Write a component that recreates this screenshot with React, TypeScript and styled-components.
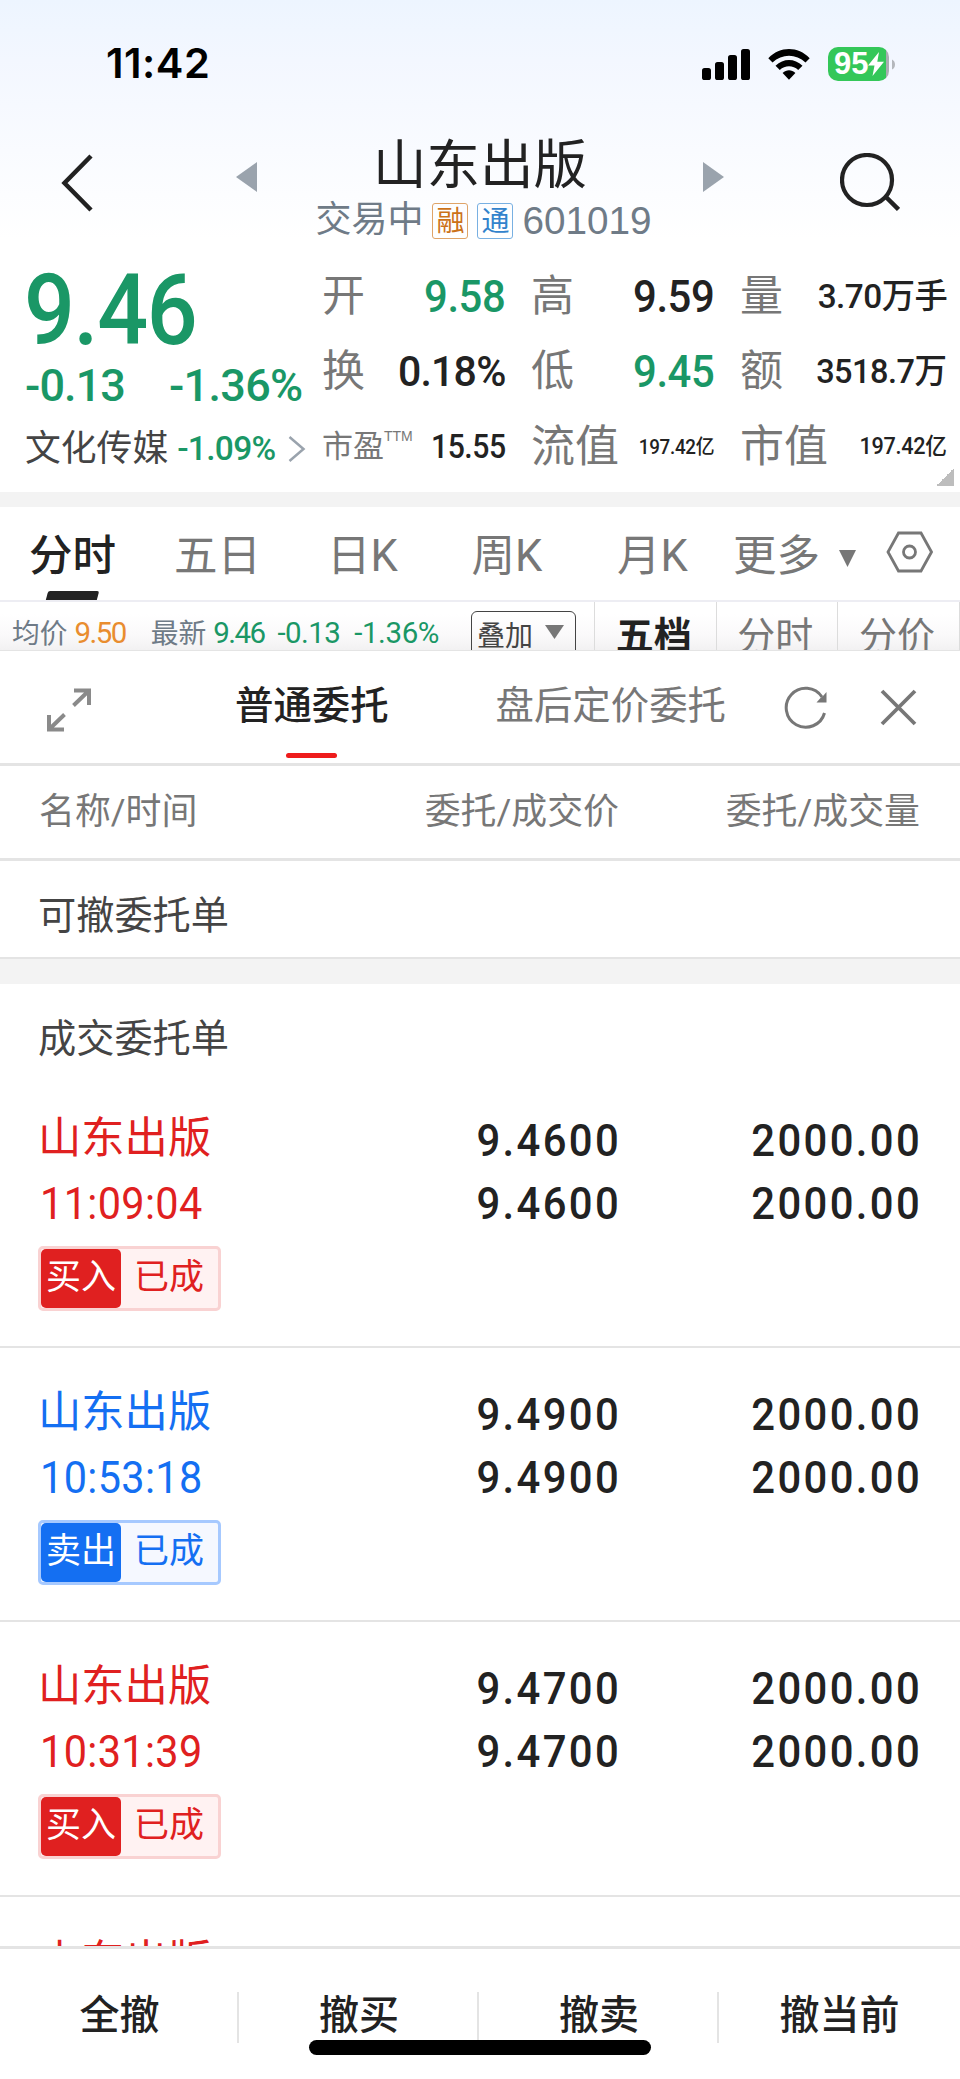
import React from "react";
import styled, { createGlobalStyle } from "styled-components";

const GREEN = "#1a9766";
const INK = "#222222";
const GREY = "#777777";
const SLATE = "#6f7b87";
const LINE = "#e4e4e4";
const RED = "#e02020";
const BLUE = "#146ff2";

const GlobalStyle = createGlobalStyle`
  * { box-sizing: border-box; }
  body {
    margin: 0;
    background: #fff;
    color: ${INK};
    font-family: Roboto, "Noto Sans CJK SC", sans-serif;
  }
  svg { display: block; flex: none; }
`;

const Screen = styled.div`
  width: 960px;
  height: 2079px;
  overflow: hidden;
  display: flex;
  flex-direction: column;
  background: #fff;
`;

interface LabelProps {
  $size: number;
  $color?: string;
  $weight?: number;
  $spacing?: number;
  $ml?: number;
}

const Label = styled.span<LabelProps>`
  font-size: ${(p) => p.$size}px;
  color: ${(p) => p.$color ?? INK};
  font-weight: ${(p) => p.$weight ?? 400};
  letter-spacing: ${(p) => p.$spacing ?? 0}px;
  margin-left: ${(p) => p.$ml ?? 0}px;
  line-height: 1.2;
  white-space: nowrap;
`;

const Digits = styled(Label)<{ $narrow?: number }>`
  font-weight: ${(p) => p.$weight ?? 500};
  transform: scaleX(${(p) => p.$narrow ?? 1});
  transform-origin: right center;
`;

/* ---------- top ---------- */

const Top = styled.header`
  height: 248px;
  flex: none;
  background: linear-gradient(#edf5ff 0, #f3f7ff 60px, #fff 240px);
`;

const StatusBar = styled.div`
  height: 128px;
  display: flex;
  align-items: center;
  padding: 0 65px 0 106px;
`;

const Clock = styled.span`
  font: 600 41.5px/1 Inter, sans-serif;
  letter-spacing: 0.5px;
  color: #000;
`;

const StatusIcons = styled.div`
  display: flex;
  align-items: center;
  margin-left: auto;
  gap: 18px;
`;

const Battery = styled.div`
  display: flex;
  align-items: center;
`;

const BatteryBody = styled.div`
  width: 61px;
  height: 34px;
  border-radius: 10px;
  display: flex;
  align-items: center;
  padding-left: 6px;
  color: #fff;
  font: 700 31px/34px "Liberation Sans", sans-serif;
  background: linear-gradient(90deg, #34c759 58px, #a9acb1 58px);
`;

const NavBar = styled.div`
  height: 110px;
  display: flex;
  align-items: center;
  padding: 0 60px 0 61px;
`;

const NavTitle = styled.div`
  display: flex;
  flex-direction: column;
  align-items: center;
  width: 446px;
  padding-top: 6px;
`;

const Title = styled.h1`
  margin: 0;
  font-size: 53.5px;
  line-height: 70px;
  font-weight: 400;
`;

const SubTitle = styled.div`
  display: flex;
  align-items: center;
  height: 40px;
  margin-left: 7px;
`;

const Tag = styled.span<{ $color: string; $line: string }>`
  width: 36px;
  height: 36px;
  border: 1.5px solid ${(p) => p.$line};
  border-radius: 3px;
  color: ${(p) => p.$color};
  font-size: 28px;
  line-height: 36px;
  text-align: center;
  margin-left: 9px;
`;

const Code = styled.span`
  font: 38.7px/40px "Liberation Sans", sans-serif;
  color: ${SLATE};
  margin-left: 9px;
`;

/* ---------- quote ---------- */

const Quote = styled.section`
  height: 244px;
  flex: none;
  display: flex;
`;

const PriceBlock = styled.div`
  width: 323px;
  padding-left: 25px;
`;

const BigPrice = styled.div`
  height: 102px;
  padding-top: 18px;
  font-size: 98px;
  line-height: 90px;
  font-weight: 500;
  letter-spacing: -1.5px;
  margin-left: -1px;
  color: ${GREEN};
  transform: scaleX(0.915);
  transform-origin: left center;
`;

const PriceRow = styled.div<{ $h: number; $pt?: number }>`
  display: flex;
  align-items: center;
  height: ${(p) => p.$h}px;
  padding-top: ${(p) => p.$pt ?? 0}px;
`;

const Stats = styled.div`
  flex: 1;
  display: grid;
  grid-template-columns: 183.5px 183.5px 207px;
  grid-template-rows: 75px 75px 76px;
  column-gap: 25.5px;
  padding: 11px 0 0 0;
  margin-left: -1px;
`;

const Stat = styled.div`
  display: flex;
  align-items: center;
  justify-content: space-between;
`;

const Ttm = styled.sup`
  font: 14px/14px "Liberation Sans", sans-serif;
  color: ${GREY};
  align-self: flex-start;
  margin: 20px auto 0 0;
`;

const Corner = styled.div`
  width: 18px;
  height: 18px;
  margin: -24px 6px 6px auto;
  background: linear-gradient(135deg, transparent 50%, #bdbdbd 50%);
`;

const Band = styled.div<{ $h: number }>`
  height: ${(p) => p.$h}px;
  flex: none;
  background: #f3f3f3;
`;

/* ---------- chart tabs ---------- */

const ChartTabs = styled.nav`
  height: 95px;
  flex: none;
  display: flex;
  align-items: center;
  border-bottom: 2px solid #ededf3;
`;

const ChartTab = styled.div<{ $w: number; $active?: boolean }>`
  width: ${(p) => p.$w}px;
  height: 93px;
  display: flex;
  flex-direction: column;
  align-items: center;
  font-size: 43.5px;
  line-height: 84px;
  padding-top: 8px;
  white-space: nowrap;
  color: ${(p) => (p.$active ? INK : GREY)};
  font-weight: ${(p) => (p.$active ? 500 : 400)};
  &::after {
    content: "";
    display: ${(p) => (p.$active ? "block" : "none")};
    width: 51px;
    height: 9px;
    margin-top: -8px;
    border-radius: 2px 2px 0 0;
    background: ${INK};
    transform: skewX(-15deg);
  }
`;

const InfoRow = styled.div`
  height: 48px;
  flex: none;
  overflow: hidden;
  display: flex;
  padding-left: 12px;
  background: linear-gradient(#fff 12px, #faf9fa 34px, #f2f1f2);
`;

const InfoText = styled.div`
  display: flex;
  align-items: center;
  height: 63px;
  width: 459px;
`;

const Overlay = styled.div`
  width: 105px;
  height: 62px;
  margin-top: 9px;
  border: 1.5px solid #444;
  border-radius: 6px;
  display: flex;
  padding: 0 11px 0 5px;
  align-items: flex-start;
  justify-content: space-between;
  font-size: 28px;
  line-height: 49px;
  color: #444;
  svg { margin-top: 13px; }
`;

const DepthTabs = styled.div`
  display: flex;
  margin-left: 18px;
`;

const DepthTab = styled.div<{ $active?: boolean }>`
  width: 121.5px;
  height: 72px;
  border-left: 1.5px solid #dcdcdc;
  padding-right: 3px;
  text-align: center;
  font-size: 38px;
  line-height: 69px;
  color: ${(p) => (p.$active ? INK : GREY)};
  font-weight: ${(p) => (p.$active ? 700 : 400)};
  &:last-child {
    width: 123px;
    border-right: 1.5px solid #dcdcdc;
  }
`;

/* ---------- order sheet ---------- */

const SheetHead = styled.div`
  height: 116px;
  flex: none;
  display: flex;
  border-top: 1px solid #e4e4e4;
  border-bottom: 3px solid ${LINE};
  padding-left: 46px;
`;

const SheetTab = styled.div<{ $active?: boolean; $ml: number }>`
  display: flex;
  flex-direction: column;
  align-items: center;
  margin-left: ${(p) => p.$ml}px;
  font-size: 38.4px;
  line-height: 102px;
  padding-top: 4px;
  height: 112px;
  color: ${(p) => (p.$active ? INK : GREY)};
  font-weight: ${(p) => (p.$active ? 500 : 400)};
  &::after {
    content: "";
    display: ${(p) => (p.$active ? "block" : "none")};
    width: 51px;
    height: 5px;
    margin-top: -4px;
    border-radius: 3px;
    background: #ee1c1c;
  }
`;

const IconSlot = styled.div<{ $mt: number; $ml?: number }>`
  margin: ${(p) => p.$mt}px 0 0 ${(p) => p.$ml ?? 0}px;
`;

const Columns = styled.div`
  display: grid;
  grid-template-columns: 281px 299px 301px;
  padding: 0 40px 0 39px;
`;

const TableHead = styled(Columns)`
  height: 95px;
  flex: none;
  border-bottom: 3px solid ${LINE};
  font-size: 35.9px;
  line-height: 92px;
  color: ${GREY};
`;

const Cell = styled.div<{ $end?: boolean }>`
  text-align: ${(p) => (p.$end ? "right" : "left")};
  white-space: nowrap;
`;

const SectionTitle = styled.div<{ $h: number; $line?: boolean }>`
  height: ${(p) => p.$h}px;
  flex: none;
  padding: 5px 0 0 38px;
  font-size: 38.2px;
  line-height: 100px;
  color: #444;
  border-bottom: ${(p) => (p.$line ? `2px solid ${LINE}` : "0")};
`;

const Orders = styled.div`
  flex: 1;
  min-height: 0;
  overflow: hidden;
`;

const Order = styled(Columns)`
  height: 274px;
  padding-top: 37px;
  border-bottom: 2px solid ${LINE};
  &:nth-child(3) { height: 275px; }
`;

const Name = styled.div<{ $color: string }>`
  color: ${(p) => p.$color};
  font-size: 43.3px;
  line-height: 56px;
  margin-left: -1px;
`;

const Time = styled.div<{ $color: string }>`
  color: ${(p) => p.$color};
  font-size: 45px;
  line-height: 56px;
  letter-spacing: 0.4px;
  margin: 9px 0 0 1px;
  transform: scaleX(0.92);
  transform-origin: left center;
`;

const Badge = styled.div<{ $line: string; $bg: string; $color: string }>`
  width: 183px;
  height: 65px;
  margin: 14px 0 0 -1px;
  display: flex;
  border: 3px solid ${(p) => p.$line};
  border-radius: 5px;
  background: ${(p) => p.$bg};
  color: ${(p) => p.$color};
  font-size: 35px;
  line-height: 58px;
`;

const Side = styled.span<{ $color: string }>`
  width: 80px;
  height: 59px;
  border-radius: 5px;
  background: ${(p) => p.$color};
  color: #fff;
  text-align: center;
  margin-right: 13px;
`;

const Amount = styled.div`
  font-size: 45px;
  line-height: 63px;
  font-weight: 500;
  letter-spacing: 2.5px;
  margin-right: -2px;
  text-align: right;
  transform: scaleX(0.93);
  transform-origin: right center;
`;

const Amounts = styled.div`
  margin-top: -2px;
`;

/* ---------- bottom ---------- */

const BottomBar = styled.footer`
  height: 133px;
  flex: none;
  border-top: 3px solid ${LINE};
  padding-top: 43px;
`;

const Actions = styled.div`
  display: grid;
  grid-template-columns: 239px 240px 240px 241px;
`;

const Action = styled.button`
  appearance: none;
  background: none;
  border: 0;
  border-right: 2px solid ${LINE};
  height: 51px;
  padding: 0 0 4px 2px;
  font: 500 40px/47px Roboto, "Noto Sans CJK SC", sans-serif;
  color: ${INK};
  &:last-child { border-right-color: transparent; }
`;

const HomeIndicator = styled.div`
  position: relative;
  width: 342px;
  height: 15px;
  margin: -3px auto 0;
  border-radius: 8px;
  background: #000;
`;

const Signal = () => (
  <svg width="48" height="31" viewBox="0 0 48 31">
    <rect x="0" y="19" width="9" height="12" rx="2.6" />
    <rect x="13" y="13" width="9" height="18" rx="2.6" />
    <rect x="26" y="6" width="9" height="25" rx="2.6" />
    <rect x="39" y="0" width="9" height="31" rx="2.6" />
  </svg>
);

const Wifi = () => (
  <svg width="42" height="31" viewBox="0 0 42 31">
    <path d="M0.3 9.2C12 -3 30 -3 41.7 9.2L37.5 13.4C28 4.5 14 4.5 4.5 13.4Z" />
    <path d="M7.5 16.7C15.500 9 26.500 9 34.500 16.700L30.200 21C25 16 17 16 11.800 21Z" />
    <path d="M14.600 24C18.500 20.400 23.500 20.400 27.400 24L21 30.700Z" />
  </svg>
);

const Down = ({ w, h }: { w: number; h: number }) => (
  <svg width={w} height={h} viewBox={`0 0 ${w} ${h}`}>
    <path d={`M0 0H${w}L${w / 2} ${h}Z`} fill="#777" />
  </svg>
);

interface OrderData {
  side: "buy" | "sell";
  time: string;
  price: string;
}

const orders: OrderData[] = [
  { side: "buy", time: "11:09:04", price: "9.4600" },
  { side: "sell", time: "10:53:18", price: "9.4900" },
  { side: "buy", time: "10:31:39", price: "9.4700" },
];

const OrderRow = ({ side, time, price }: OrderData) => {
  const buy = side === "buy";
  const color = buy ? RED : BLUE;
  return (
    <Order>
      <div>
        <Name $color={color}>山东出版</Name>
        <Time $color={color}>{time}</Time>
        <Badge $color={color} $line={buy ? "#f9d2d2" : "#a6c9ff"} $bg={buy ? "#fff2f2" : "#f5f8ff"}>
          <Side $color={color}>{buy ? "买入" : "卖出"}</Side>
          已成
        </Badge>
      </div>
      <Amounts>
        <Amount>{price}</Amount>
        <Amount>{price}</Amount>
      </Amounts>
      <Amounts>
        <Amount>2000.00</Amount>
        <Amount>2000.00</Amount>
      </Amounts>
    </Order>
  );
};

export default function App() {
  return (
    <Screen>
      <GlobalStyle />
      <Top>
        <StatusBar>
          <Clock>11:42</Clock>
          <StatusIcons>
            <Signal />
            <Wifi />
            <Battery>
              <BatteryBody>
                95
                <svg width="16" height="24" viewBox="0 0 16 24">
                  <path d="M11 0L0 13.500H6.500L4.500 24L16 9.800H9.300Z" fill="#fff" />
                </svg>
              </BatteryBody>
              <svg width="6" height="11" viewBox="0 0 6 11">
                <path d="M3 0.500Q6 2 6 5.500T3 10.500Z" fill="#b4b7bc" />
              </svg>
            </Battery>
          </StatusIcons>
        </StatusBar>
        <NavBar>
          <svg width="32" height="58" viewBox="0 0 32 58">
            <path d="M30 2L3.500 29L30 56" fill="none" stroke={INK} strokeWidth="4.500" />
          </svg>
          <IconSlot $mt={-12} $ml={143}>
            <svg width="21" height="30" viewBox="0 0 21 30">
              <path d="M21 0V30L0 15Z" fill="#9aa3ad" />
            </svg>
          </IconSlot>
          <NavTitle>
            <Title>山东出版</Title>
            <SubTitle>
              <Label $size={36} $color={SLATE}>交易中</Label>
              <Tag $color="#cc7218" $line="#dfa468">融</Tag>
              <Tag $color="#3283cc" $line="#78b0e2">通</Tag>
              <Code>601019</Code>
            </SubTitle>
          </NavTitle>
          <IconSlot $mt={-12}>
            <svg width="21" height="30" viewBox="0 0 21 30">
              <path d="M0 0V30L21 15Z" fill="#9aa3ad" />
            </svg>
          </IconSlot>
          <IconSlot $mt={0} $ml={116}>
            <svg width="60" height="60" viewBox="0 0 60 60">
              <circle cx="27" cy="27" r="25" fill="none" stroke={INK} strokeWidth="4.200" />
              <path d="M45 43L58.500 56.500" stroke={INK} strokeWidth="4.500" />
            </svg>
          </IconSlot>
        </NavBar>
      </Top>

      <Quote>
        <PriceBlock>
          <BigPrice>9.46</BigPrice>
          <PriceRow $h={70} $pt={2}>
            <Digits $size={45} $color={GREEN} $spacing={-0.9}>-0.13</Digits>
            <Digits $size={45} $color={GREEN} $spacing={-0.7} $ml={44}>-1.36%</Digits>
          </PriceRow>
          <PriceRow $h={56} $pt={2}>
            <Label $size={35.8} $color="#444">文化传媒</Label>
            <Digits $size={33.5} $color={GREEN} $spacing={-0.7} $ml={9}>-1.09%</Digits>
            <IconSlot $mt={0} $ml={13}>
              <svg width="18" height="28" viewBox="0 0 18 28">
                <path d="M1.500 2L15.500 14L1.500 26" fill="none" stroke="#9aa3ad" strokeWidth="2.500" />
              </svg>
            </IconSlot>
          </PriceRow>
        </PriceBlock>
        <Stats>
          <Stat>
            <Label $size={43} $color={GREY}>开</Label>
            <Digits $size={45} $color={GREEN} $spacing={-0.5} $narrow={0.93}>9.58</Digits>
          </Stat>
          <Stat>
            <Label $size={43} $color={GREY}>高</Label>
            <Digits $size={45} $spacing={-0.5} $narrow={0.93}>9.59</Digits>
          </Stat>
          <Stat>
            <Label $size={43} $color={GREY}>量</Label>
            <Digits $size={34} $spacing={-0.5} $narrow={0.98}>3.70万手</Digits>
          </Stat>
          <Stat>
            <Label $size={43} $color={GREY}>换</Label>
            <Digits $size={42.5} $spacing={-0.8} $narrow={0.965}>0.18%</Digits>
          </Stat>
          <Stat>
            <Label $size={43} $color={GREY}>低</Label>
            <Digits $size={45} $color={GREEN} $spacing={-0.5} $narrow={0.93}>9.45</Digits>
          </Stat>
          <Stat>
            <Label $size={43} $color={GREY}>额</Label>
            <Digits $size={34} $spacing={-0.5} $narrow={0.955}>3518.7万</Digits>
          </Stat>
          <Stat>
            <Label $size={31} $color={GREY}>市盈</Label>
            <Ttm>TTM</Ttm>
            <Digits $size={33} $spacing={-0.5} $narrow={0.915}>15.55</Digits>
          </Stat>
          <Stat>
            <Label $size={44} $color={GREY}>流值</Label>
            <Digits $size={20} $spacing={-0.3} $narrow={0.94}>197.42亿</Digits>
          </Stat>
          <Stat>
            <Label $size={44} $color={GREY}>市值</Label>
            <Digits $size={23} $spacing={-0.3} $narrow={0.94}>197.42亿</Digits>
          </Stat>
        </Stats>
      </Quote>
      <Corner />
      <Band $h={15} />

      <ChartTabs>
        <ChartTab $w={145} $active>分时</ChartTab>
        <ChartTab $w={145}>五日</ChartTab>
        <ChartTab $w={145}>日K</ChartTab>
        <ChartTab $w={144}>周K</ChartTab>
        <ChartTab $w={147}>月K</ChartTab>
        <ChartTab $w={101}>更多</ChartTab>
        <IconSlot $mt={9} $ml={12}>
          <Down w={17} h={17} />
        </IconSlot>
        <IconSlot $mt={-4} $ml={30}>
          <svg width="47" height="42" viewBox="0 0 47 42">
            <path d="M12.500 2H35L45.500 21L35 40H12.500L2 21Z" fill="none" stroke="#777" strokeWidth="2.800" />
            <circle cx="23.500" cy="21" r="6" fill="none" stroke="#777" strokeWidth="2.800" />
          </svg>
        </IconSlot>
      </ChartTabs>

      <InfoRow>
        <InfoText>
          <Label $size={27.8} $color={SLATE}>均价</Label>
          <Digits $size={29.5} $weight={400} $color="#e98d2f" $ml={7} $spacing={-1.6}>9.50</Digits>
          <Label $size={27.8} $color={SLATE} $ml={25}>最新</Label>
          <Digits $size={29.5} $weight={400} $color={GREEN} $ml={7} $spacing={-1.6}>9.46</Digits>
          <Digits $size={29.5} $weight={400} $color={GREEN} $ml={13} $spacing={-0.6}>-0.13</Digits>
          <Digits $size={29.5} $weight={400} $color={GREEN} $ml={14} $spacing={-0.4}>-1.36%</Digits>
        </InfoText>
        <Overlay>
          叠加
          <Down w={19} h={14} />
        </Overlay>
        <DepthTabs>
          <DepthTab $active>五档</DepthTab>
          <DepthTab>分时</DepthTab>
          <DepthTab>分价</DepthTab>
        </DepthTabs>
      </InfoRow>

      <SheetHead>
        <IconSlot $mt={37}>
          <svg width="46" height="44" viewBox="0 0 46 44" fill="none" stroke="#8a8a8a" strokeWidth="4">
            <path d="M28 2.500H43V17M42 3.500L27.500 17.500" />
            <path d="M18 41.500H3V27M4 40.500L18.500 26.500" />
          </svg>
        </IconSlot>
        <SheetTab $active $ml={143}>普通委托</SheetTab>
        <SheetTab $ml={107}>盘后定价委托</SheetTab>
        <IconSlot $mt={34} $ml={58}>
          <svg width="44" height="44" viewBox="0 0 44 44">
            <path d="M40.500 28A19.500 19.500 0 1 1 38 12" fill="none" stroke="#777" strokeWidth="3" />
            <path d="M42.500 7V17.500H32.500L36.500 13L39 11Z" fill="#777" />
          </svg>
        </IconSlot>
        <IconSlot $mt={38} $ml={52}>
          <svg width="37" height="37" viewBox="0 0 37 37">
            <path d="M2 2L35 35M35 2L2 35" stroke="#777" strokeWidth="3.800" />
          </svg>
        </IconSlot>
      </SheetHead>

      <TableHead>
        <Cell>名称/时间</Cell>
        <Cell $end>委托/成交价</Cell>
        <Cell $end>委托/成交量</Cell>
      </TableHead>
      <SectionTitle $h={98} $line>可撤委托单</SectionTitle>
      <Band $h={25} />
      <SectionTitle $h={90}>成交委托单</SectionTitle>

      <Orders>
        {orders.map((o) => (
          <OrderRow key={o.time} {...o} />
        ))}
        <Order>
          <Name $color={RED}>山东出版</Name>
        </Order>
      </Orders>

      <BottomBar>
        <Actions>
          <Action>全撤</Action>
          <Action>撤买</Action>
          <Action>撤卖</Action>
          <Action>撤当前</Action>
        </Actions>
        <HomeIndicator />
      </BottomBar>
    </Screen>
  );
}
